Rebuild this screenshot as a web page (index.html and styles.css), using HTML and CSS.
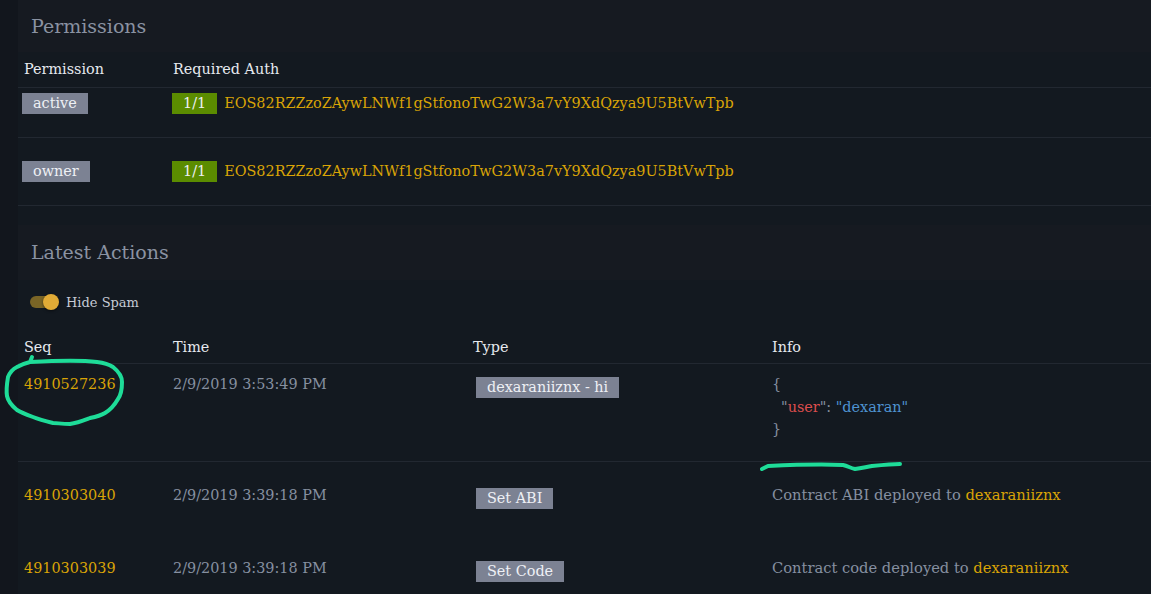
FILE: index.html
```html
<!DOCTYPE html>
<html>
<head>
<meta charset="utf-8">
<link rel="stylesheet" href="styles.css">
</head>
<body>
<main class="page">
  <section class="section">
    <h2 class="section-title">Permissions</h2>
    <div class="card card-perms">
      <table class="grid perms">
        <colgroup><col class="c-perm"><col></colgroup>
        <thead>
          <tr><th>Permission</th><th>Required Auth</th></tr>
        </thead>
        <tbody>
          <tr class="prow prow-first">
            <td class="pcell-name"><span class="badge badge-grey">active</span></td>
            <td><div class="auth"><span class="badge badge-green">1/1</span><span class="key">EOS82RZZzoZAywLNWf1gStfonoTwG2W3a7vY9XdQzya9U5BtVwTpb</span></div></td>
          </tr>
          <tr class="prow">
            <td class="pcell-name"><span class="badge badge-grey">owner</span></td>
            <td><div class="auth"><span class="badge badge-green">1/1</span><span class="key">EOS82RZZzoZAywLNWf1gStfonoTwG2W3a7vY9XdQzya9U5BtVwTpb</span></div></td>
          </tr>
        </tbody>
      </table>
    </div>
  </section>

  <section class="section">
    <h2 class="section-title">Latest Actions</h2>
    <div class="card card-actions">
      <label class="toggle-row">
        <span class="toggle"><span class="knob"></span></span>
        <span class="toggle-label">Hide Spam</span>
      </label>
      <table class="grid actions">
        <colgroup><col class="c-seq"><col class="c-time"><col class="c-type"><col></colgroup>
        <thead>
          <tr><th>Seq</th><th>Time</th><th>Type</th><th>Info</th></tr>
        </thead>
        <tbody>
          <tr class="arow arow-first">
            <td class="seq">4910527236</td>
            <td class="time">2/9/2019 3:53:49 PM</td>
            <td><span class="badge badge-grey badge-type">dexaraniiznx - hi</span></td>
            <td class="info">
              <div class="json">
                <div class="jp">{</div>
                <div class="jline"><span class="jp">"</span><span class="jkey">user</span><span class="jp">": </span><span class="jval">"dexaran"</span></div>
                <div class="jp">}</div>
              </div>
            </td>
          </tr>
          <tr class="arow">
            <td class="seq">4910303040</td>
            <td class="time">2/9/2019 3:39:18 PM</td>
            <td><span class="badge badge-grey badge-type">Set ABI</span></td>
            <td class="info">Contract ABI deployed to <span class="acct">dexaraniiznx</span></td>
          </tr>
          <tr class="arow">
            <td class="seq">4910303039</td>
            <td class="time">2/9/2019 3:39:18 PM</td>
            <td><span class="badge badge-grey badge-type">Set Code</span></td>
            <td class="info">Contract code deployed to <span class="acct">dexaraniiznx</span></td>
          </tr>
        </tbody>
      </table>
    </div>
  </section>
</main>

<svg class="annotations" width="1151" height="594" viewBox="0 0 1151 594">
  <path d="M32 357 L30 362 C50 361 80 360 97 362 C106 363 110 365 113 367 C118 371 122 376 122 382 C122 390 121 395 118 399 C114 406 110 410 105 413 C100 416 95 417 90 418 C82 421 77 423 70 424 C62 424 57 423 53 423 C45 421 38 419 33 417 C25 414 20 412 17 410 C11 405 8 401 7 396 C6 390 7 383 8 377 C10 372 13 369 17 367 C22 364 26 363 30 362" class="mark"/>
  <path d="M762 469 L768 466 C790 465 820 464 843 465 C848 466 850 468 855 469 C862 468 866 467 872 466 C882 465 892 464 900 464" class="mark"/>
</svg>
</body>
</html>
```

FILE: styles.css
```css
html, body {
  margin: 0;
  padding: 0;
}
body {
  background: #12161d;
  font-family: "DejaVu Serif", serif;
  font-size: 14.4px;
  color: #e4e7ee;
  width: 1151px;
  height: 594px;
  overflow: hidden;
  position: relative;
}
.page {
  margin-left: 18px;
}
.section-title {
  margin: 0;
  background: #161a21;
  font-weight: normal;
  font-size: 19px;
  color: #8a92a2;
  padding-left: 13px;
  line-height: 20px;
  box-sizing: border-box;
}
.section:first-child .section-title {
  padding-top: 16px;
  height: 52px;
}
.section:nth-child(2) .section-title {
  padding-top: 17px;
  height: 55px;
}
.card {
  background: #131920;
}
.card-perms {
  padding-bottom: 19px;
}
.grid {
  width: 100%;
  border-collapse: collapse;
  table-layout: fixed;
}
.grid th {
  font-weight: normal;
  text-align: left;
  color: #e6e9ef;
  line-height: 22px;
  padding: 6px 6px 7px;
  border-bottom: 1px solid #222831;
}
.grid td {
  padding: 0 6px;
  vertical-align: top;
  line-height: 22px;
}
.c-perm { width: 149px; }
.c-seq { width: 149px; }
.c-time { width: 300px; }
.c-type { width: 299px; }

.prow td {
  padding-top: 23px;
  padding-bottom: 22px;
  border-bottom: 1px solid #222831;
}
.prow-first td {
  padding-top: 5px;
}
.pcell-name {
  padding-left: 4px !important;
}
.auth {
  display: flex;
  align-items: center;
  gap: 7px;
  margin-left: -1px;
}
.badge {
  display: inline-block;
  height: 21px;
  line-height: 21px;
  padding: 0 11px;
  color: #eef0f5;
  white-space: nowrap;
  vertical-align: top;
}
.badge-grey {
  background: #7c8293;
}
.badge-green {
  background: #5b8c00;
  padding: 0 11px;
}
.key {
  color: #d9a406;
  line-height: 21px;
}

.toggle-row {
  display: flex;
  align-items: center;
  gap: 8px;
  padding: 14px 0 21px 12px;
  height: 16px;
}
.toggle {
  position: relative;
  width: 28px;
  height: 12px;
  border-radius: 6px;
  background: #7a6526;
}
.knob {
  position: absolute;
  right: -1px;
  top: -2px;
  width: 16px;
  height: 16px;
  border-radius: 50%;
  background: #e1ab36;
  box-shadow: 0 1px 3px rgba(0,0,0,0.5);
}
.toggle-label {
  font-size: 13px;
  color: #c6cbd6;
}

.actions th {
  padding-top: 5px;
  padding-bottom: 5px;
}
.arow td {
  padding-top: 22px;
  padding-bottom: 26px;
}
.arow-first td {
  padding-top: 9px;
  padding-bottom: 20px;
  border-bottom: 1px solid #222831;
}
.seq {
  color: #d9a406;
}
.time {
  color: #8690a0;
}
.badge-type {
  margin-top: 4px;
  margin-left: 3px;
  padding: 0 11px;
}
.info {
  color: #8690a0;
  font-size: 14.7px;
}
.json {
  line-height: 22.5px;
  font-size: 14.4px;
}
.jline {
  padding-left: 9px;
}
.jp {
  color: #8690a0;
}
.jkey {
  color: #dc4d4d;
}
.jval {
  color: #4e93d1;
}
.acct {
  color: #d9a406;
}

.annotations {
  position: absolute;
  left: 0;
  top: 0;
  pointer-events: none;
}
.mark {
  fill: none;
  stroke: #1edc98;
  stroke-width: 4;
  stroke-linecap: round;
  stroke-linejoin: round;
}
```
